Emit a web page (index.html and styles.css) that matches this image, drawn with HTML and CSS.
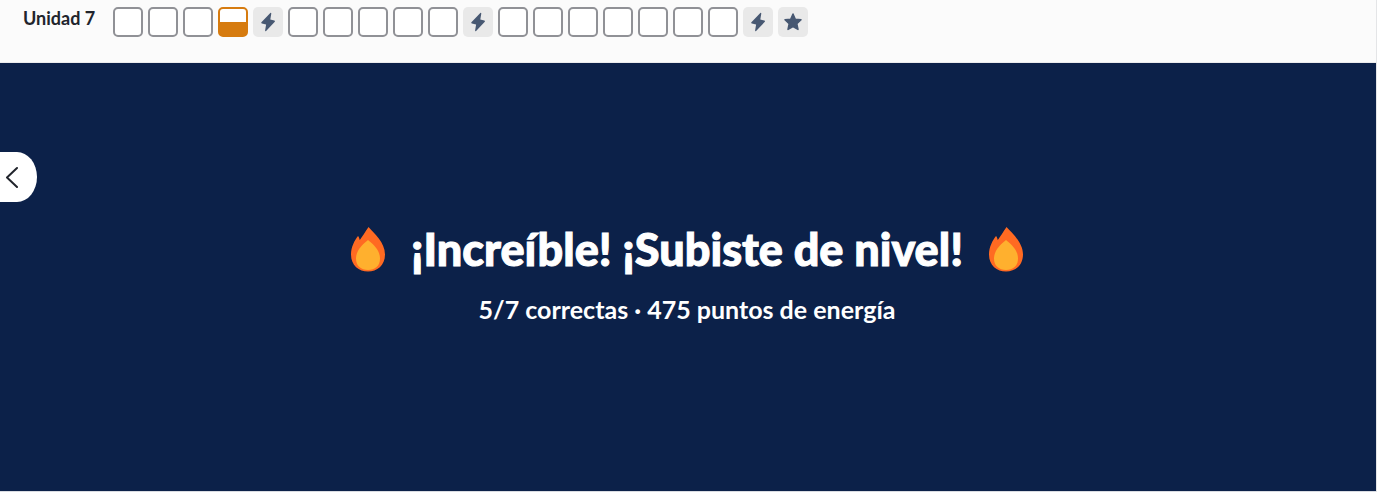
FILE: index.html
```
<!DOCTYPE html>
<html lang="es">
<head>
<meta charset="utf-8">
<meta name="viewport" content="width=device-width, initial-scale=1">
<title>Unidad 7</title>
<link rel="stylesheet" href="styles.css">
</head>
<body>
<svg class="sprite" aria-hidden="true">
  <symbol id="bolt" viewBox="0 0 30 30"><path d="M17.3 6 8.400 15.200q-.6.9.5 1.200l4.200 1.200-1 6q.1 1.100 1 .4l8.700-9.200q.6-.9-.5-1.200l-4-1.200 1-5.900q-.1-1.100-1-.5z"/></symbol>
  <symbol id="star" viewBox="0 0 30 30"><path d="M15 7l2.300 5.200 5.700.6-4.200 3.900 1.200 5.700-5-2.900-5 2.900 1.200-5.700L7 12.800l5.700-.6z" stroke-width="1.500" stroke-linejoin="round"/></symbol>
  <symbol id="flame" viewBox="0 0 34 45"><path fill="#ff6a22" d="M17.500 0C23 6 34 15.500 34 27.500 34 38.500 26 44.500 17 44.500S0 38.500 0 27.500C0 20 3.500 13.500 7 9c1 .5 1.300 2.500 1.700 4C11 10.500 14 5 17.500 0z"/><path fill="#ffb02e" d="M17 13c5 4 12 10 12 18.500C29 39 24 43 17 43S5 39 5 31.500C5 23 12 17 17 13z"/></symbol>
</svg>
<header class="unit">
  <h2 class="unit-name">Unidad 7</h2>
  <ol class="steps">
    <li class="step"></li><li class="step"></li><li class="step"></li><li class="step familiar"></li>
    <li class="step badge"><svg><use href="#bolt"/></svg></li>
    <li class="step"></li><li class="step"></li><li class="step"></li><li class="step"></li><li class="step"></li>
    <li class="step badge"><svg><use href="#bolt"/></svg></li>
    <li class="step"></li><li class="step"></li><li class="step"></li><li class="step"></li><li class="step"></li><li class="step"></li><li class="step"></li>
    <li class="step badge"><svg><use href="#bolt"/></svg></li>
    <li class="step badge"><svg><use href="#star"/></svg></li>
  </ol>
</header>
<main class="banner">
  <button class="back" type="button" aria-label="Anterior"><svg viewBox="0 0 14 22"><path d="M12 2 2 11.500 12 21"/></svg></button>
  <div class="headline">
    <svg class="flame"><use href="#flame"/></svg>
    <h1 class="title">¡Increíble! ¡Subiste de nivel!</h1>
    <svg class="flame"><use href="#flame"/></svg>
  </div>
  <p class="score">5/7 correctas · 475 puntos de energía</p>
</main>
</body>
</html>
```
FILE: styles.css
```
* { box-sizing: border-box; }
body {
  margin: 0;
  border-right: 1px solid #e4e5e7;
  background: #fff;
  color: #21242c;
  font-family: Lato, "Noto Sans", sans-serif;
}
.sprite { display: none; }
.unit {
  display: flex;
  align-items: flex-start;
  gap: 18px;
  padding: 7px 23px 25px;
  background: #fbfbfb;
  border-bottom: 1px solid #ececed;
}
.unit-name {
  margin: 0;
  font-size: 18px;
  line-height: 22px;
  font-weight: 700;
}
.steps {
  display: flex;
  gap: 5px;
  margin: 0;
  padding: 0;
  list-style: none;
}
.step {
  width: 30px;
  height: 30px;
  border: 2px solid #909196;
  border-radius: 5px;
  background: #fff;
}
.familiar {
  border-color: #d67b0f;
  background: linear-gradient(#fff 50%, #d67b0f 50%);
}
.badge {
  border: 0;
  background: #e9e9e9;
}
.badge svg {
  display: block;
  width: 30px;
  height: 30px;
  fill: #475872;
  stroke: #475872;
  stroke-width: 0;
}
.banner {
  position: relative;
  display: flex;
  flex-direction: column;
  align-items: center;
  gap: 16px;
  padding: 156px 18px 168px 16px;
  background: #0c2149;
  border-bottom: 1px solid #d9dce2;
  color: #fff;
}
.back {
  position: absolute;
  top: 89px;
  left: 0;
  display: flex;
  align-items: center;
  width: 37px;
  height: 50px;
  padding: 0 0 0 5px;
  border: 0;
  border-radius: 0 20px 20px 0 / 0 25px 25px 0;
  background: #fff;
}
.back svg {
  width: 14px;
  height: 22px;
  fill: none;
  stroke: #21242c;
  stroke-width: 2;
  stroke-linecap: round;
  stroke-linejoin: round;
}
.headline {
  display: flex;
  align-items: center;
  gap: 26px;
}
.flame {
  width: 34px;
  height: 45px;
}
.title {
  margin: 0;
  font-size: 45px;
  line-height: 60px;
  font-weight: 900;
  -webkit-text-stroke: 1px #fff;
}
.score {
  margin: 0;
  font-size: 25px;
  line-height: 28px;
  font-weight: 700;
}
```
